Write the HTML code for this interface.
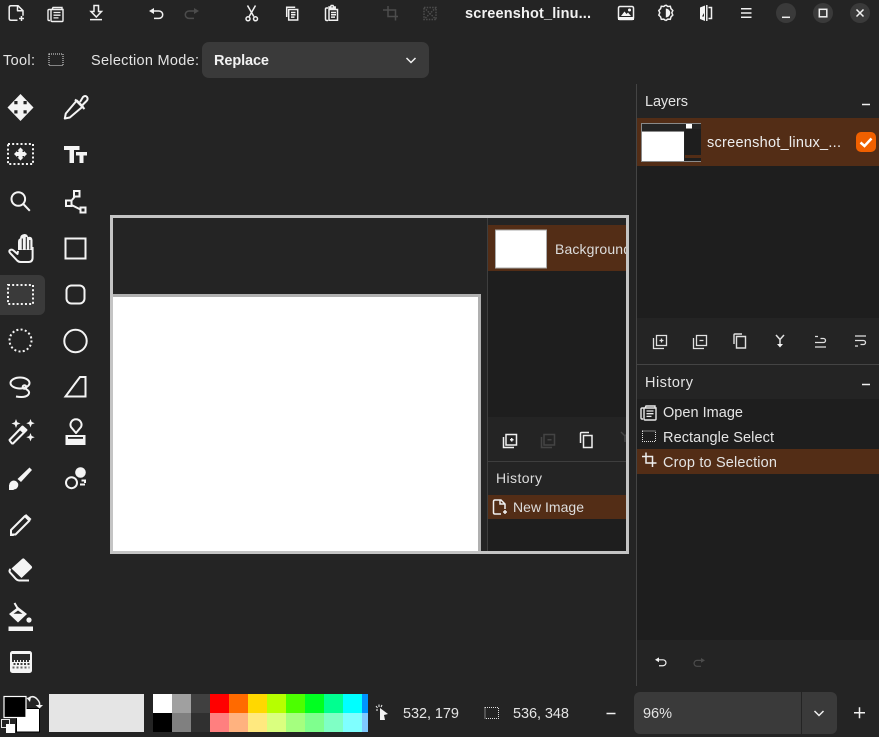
<!DOCTYPE html>
<html><head><meta charset="utf-8"><title>Pinta</title>
<style>
html,body{margin:0;padding:0;background:#242424;width:879px;height:737px;overflow:hidden}
svg{display:block}
text{font-family:"Liberation Sans",sans-serif;font-size:14.5px;fill:#e4e4e4}
.b{font-weight:700;fill:#f2f2f2}
.i{fill:none;stroke:#f0f0f0;stroke-width:1.5}
.t{fill:none;stroke:#f4f4f4;stroke-width:2}
.f{fill:#f4f4f4;stroke:none}
.d{fill:none;stroke:#4c4c4c;stroke-width:1.5}
</style></head><body>
<svg width="879" height="737" viewBox="0 0 879 737" xmlns="http://www.w3.org/2000/svg">
<defs>
<clipPath id="cl"><rect x="488" y="218" width="138" height="333"/></clipPath>
<g id="open"><path d="M1 4h3l1-2h9v2M1 4c-1 0-1 1-1 1v9c0 1 1 1 1 1h1M3 4h12v11c0 1-1 1-1 1H4c-1 0-1-1-1-1z" fill="none" stroke-width="1.4"/><path d="M5.500 7h7M5.500 9.700h7M5.500 12.400h5" fill="none" stroke-width="1.300"/></g>
<g id="undo"><path d="M4 3h6a3.700 3.700 0 0 1 0 7.400H5" fill="none" stroke-width="1.500"/><path d="M0 3l5-3v6z" stroke="none"/></g>
</defs>
<rect width="879" height="737" fill="#242424"/>

<!-- header icons -->
<path class="i" d="M13.500 5.700h-2.500q-1.800 0-1.800 1.800v11q0 1.800 1.800 1.800h6.500M13.500 5.700h4.500l5 5v5M17.500 5.700v5h5.500" stroke-linejoin="round"/>
<path class="i" d="M19 18.500h5M21.500 16v5" stroke-width="1.200"/>
<use href="#open" x="48" y="5.500" stroke="#f0f0f0"/>
<path class="i" d="M94 5.500h4.500v6h3l-5.200 5.500-5.300-5.500h3zM90 19.600h12"/>
<use href="#undo" x="149" y="8" stroke="#f0f0f0" fill="#f0f0f0"/>
<g transform="translate(199 8) scale(-1 1)" fill="#4c4c4c" stroke="#4c4c4c"><use href="#undo"/></g>
<path class="i" d="M247.500 5.500l6.300 11M255.500 5.500l-6.300 11"/>
<circle class="i" cx="248" cy="18.800" r="2"/><circle class="i" cx="255.500" cy="18.800" r="2"/>
<path class="i" d="M286.700 17V7.200h8.500M288.700 9.500h9v10.500h-9zM291 12.500h4.500M291 14.800h4.500M291 17.100h3.500" stroke-width="1.300"/>
<path class="i" d="M328 8h-1.500q-1 0-1 1v10q0 1.500 1.500 1.500h1M329 9.500h8.500v10.800h-8.500zM329 8V7h1.500l.7-1.500h1.800l.7 1.500h1.500v1zM331 12.500h5M331 14.800h5M331 17.100h4" stroke-width="1.300"/>
<path class="d" d="M383 10h12.500v10.500M388 6v10.500h10" stroke-width="2"/>
<path class="d" d="M424 7.500h12v12h-12zM424 7.500l12 12M436 7.500l-12 12" stroke-dasharray="1.500 1.200" stroke-width="1.500"/>

<text class="b" x="465" y="18" textLength="126" lengthAdjust="spacing" style="font-size:14.500px">screenshot_linu...</text>

<rect x="618.500" y="6.500" width="15" height="13" rx="1.500" class="i"/>
<path class="f" d="M621 16l3.500-4.500 2 2.500 1.500-1.500 3 3.500zM618 17h16v3h-16z"/><circle class="f" cx="629.500" cy="10" r="1.500"/>
<path class="i" d="M665.800 6l2 1.500 2.500-.2.700 2.400 1.800 1.800-1 2.300 1 2.300-1.800 1.800-.7 2.400-2.500-.2-2 1.500" transform="translate(0 -1)"/>
<path class="i" d="M665.800 5l-2 1.500-2.500-.2-.7 2.400-1.800 1.800 1 2.300-1 2.300 1.800 1.800.7 2.400 2.500-.2 2 1.500" />
<path class="f" d="M665.800 8.500a4.500 4.500 0 0 1 0 9z"/>
<path class="f" d="M700 7.500l5-2v15.500l-5-2z"/>
<path class="i" d="M706.800 5v16" stroke-width="1"/>
<path class="i" d="M708.500 7.500h3v11h-3" stroke-width="1.300"/>
<path d="M702 16.500l2-3.500v3.500z" fill="#242424"/>
<path class="i" d="M741 8.700h10.500M741 13h10.500M741 17.300h10.500" stroke-width="1.200"/>

<circle cx="786" cy="13" r="10" fill="#3a3a3a"/><circle cx="823" cy="13" r="10" fill="#3a3a3a"/><circle cx="860" cy="13" r="10" fill="#3a3a3a"/>
<path class="i" d="M782 17.300h8" stroke-width="1.400"/>
<rect x="819.300" y="9.300" width="7.500" height="7.500" class="i" stroke-width="1.300"/>
<path class="i" d="M856.500 9.500l7 7M863.500 9.500l-7 7" stroke-width="1.300"/>

<!-- tool options -->
<text x="3" y="65" textLength="32">Tool:</text>
<rect x="49" y="54" width="14" height="11.500" fill="none" stroke="#e4e4e4" stroke-dasharray="1 1"/>
<text x="91" y="65" textLength="108">Selection Mode:</text>
<rect x="202" y="42" width="227" height="36" rx="7" fill="#3a3a3a"/>
<text class="b" x="214" y="65" textLength="55">Replace</text>
<path class="i" d="M406.500 58l4.500 4.500 4.500-4.500" stroke-width="1"/>

<!-- toolbox -->
<path d="M0 275h39a6 6 0 0 1 6 6v28a6 6 0 0 1-6 6H0z" fill="#3a3a3a"/>

<!-- move -->
<path class="f" d="M20.500 94l13 13.500-13 13.500-13-13.500z"/>
<path d="M14.300 101h3.200v3.200h-3.200zM23.500 101h3.200v3.200h-3.200zM14.300 110.300h3.200v3.200h-3.200zM23.500 110.300h3.200v3.200h-3.200z" fill="#242424"/>
<!-- rect select move -->
<rect x="8" y="144" width="25" height="20" class="t" stroke-dasharray="2 2.170" stroke-width="2.200"/>
<path class="f" d="M20.500 147.500l6.500 6.500-6.500 6.500-6.500-6.500z"/>
<path d="M17 150.500h1.500v1.500H17zM22.500 150.500H24v1.500h-1.500zM17 156h1.500v1.500H17zM22.500 156H24v1.500h-1.500z" fill="#242424"/>
<!-- magnify -->
<circle cx="18.300" cy="199" r="6.800" class="t"/><path class="t" d="M23.300 204l6.500 6.800" stroke-width="2.200"/>
<!-- hand -->
<path class="t" d="M18 251l-.5 3-4-3.500q-1.800-1.500-3.400-.5t0 3l7 7.500q1.500 1.500 3.500 1.500h8q4 0 4-4.500V247" stroke-linejoin="round"/>
<path class="f" d="M18 242q0-3 2-3.500 0-4 4.500-4.500 3 0 3.500 3 4-1 4.500 3v10H18z"/>
<path d="M22.300 238.500v11M26.300 237v12.500M29.800 240v9.500" stroke="#242424" stroke-width="1.100"/>
<!-- dotted rect -->
<rect x="8" y="285" width="25" height="19" class="t" stroke-dasharray="2 2.170" stroke-width="2.200"/>
<!-- dotted circle -->
<circle cx="20.500" cy="340.500" r="11" class="t" stroke-dasharray="2 2.300" stroke-width="2.200"/>
<!-- lasso -->
<ellipse cx="20" cy="383" rx="9.500" ry="5.500" class="t" stroke-width="1.800"/>
<circle cx="24.500" cy="387" r="1.800" class="t" stroke-width="1.800"/>
<path class="t" d="M26 389q5 3 2 6t-12 1.500" stroke-width="1.800"/>
<!-- wand -->
<path class="t" d="M10 441l-.5-1 13-13.500 4 3.500-13.500 13.500-1 0z" stroke-linejoin="round"/>
<path class="f" d="M19.500 430l3-3.500 4 3.500-3.500 3z"/>
<path class="f" d="M16 419l1.200 3.300 3.300 1.200-3.300 1.200-1.200 3.300-1.200-3.300-3.300-1.200 3.300-1.200zM30.500 419l1.200 3 3 1.200-3 1.200-1.200 3-1.200-3-3-1.200 3-1.200zM30.500 433l1.200 3 3 1.200-3 1.200-1.200 3-1.200-3-3-1.200 3-1.200z"/>
<!-- brush -->
<path class="f" d="M29.500 467.500l2.500 2.500-11 12-3.500-3z"/><circle class="f" cx="13.800" cy="485" r="4.500"/><path class="f" d="M9 484.500v5.500h5z"/>
<!-- pencil -->
<path class="t" d="M11 534.500v-4.500l14-14 4.500 4.500-14 14z" stroke-linejoin="round" stroke-width="1.700"/>
<path class="f" d="M26 514l5.500 5-2.500 2.500-5-5zM10 536v-4l4 4z"/>
<!-- eraser -->
<path class="f" d="M22 559q1.300-1.300 2.500 0l7 7q1.200 1.300 0 2.500l-10 9.500-10-9.500z"/>
<path class="t" d="M10.500 569q-2 2 0 4l5.500 6q1.500 1.500 3 1.500h10" stroke-width="1.300"/>
<!-- fill -->
<path class="t" d="M14.500 603l3.500 6" stroke-width="1.700"/>
<path class="f" d="M18 607l9 7-9 8.500-9-8.500z"/><path d="M18 610.500l4.500 3.200h-9z" fill="#242424"/>
<circle cx="29" cy="620" r="2.600" class="f"/>
<rect x="8.500" y="626.500" width="24.500" height="4.500" class="f"/>
<!-- gradient -->
<rect x="10" y="651" width="22" height="22" rx="2.500" class="f"/>
<rect x="12" y="654" width="18" height="6" fill="#2a2a2a"/>
<path d="M12 661h18" stroke="#333" stroke-width="2" stroke-dasharray="2 1"/>
<path d="M13.500 664h16" stroke="#444" stroke-width="2" stroke-dasharray="2 1.500"/>
<path d="M12.500 667.500h17" stroke="#666" stroke-width="2" stroke-dasharray="2 2"/>

<!-- col 2 -->
<path class="t" d="M64.800 118.500l1-5 11-13 6 6-13 11z" stroke-width="1.500" stroke-linejoin="round"/>
<path class="t" d="M75 99.500l9.500 9.500" stroke-width="2"/>
<path class="t" d="M80 102l3-5q2.500-2 4 0t-.5 4l-4 4" stroke-width="1.700"/>
<path class="f" d="M64 146h15.500v4h-5.500v13h-4.500v-13H64zM76 152h11v3.500h-3.500V163h-4v-7.500H76z"/>
<rect x="74" y="191" width="5.500" height="5.500" class="t"/><rect x="66" y="200.500" width="5.500" height="5.500" class="t"/><rect x="80.500" y="207.500" width="5" height="5" class="t"/>
<path class="t" d="M72 200l2.500-3M71.500 205l9 4.500" stroke-width="1.800"/>
<rect x="65.500" y="238.500" width="20" height="20" class="t"/>
<rect x="66.500" y="285.500" width="18" height="18" rx="5" class="t"/>
<circle cx="75.500" cy="341" r="11.200" class="t"/>
<path class="t" d="M65.500 396.500h20V377h-5.500l-6 8-8.500 11.500z" stroke-linejoin="miter"/>
<path class="t" d="M76 433L71 427A5.500 5.500 0 1 1 81 427Z" stroke-linejoin="round" stroke-width="1.800"/>
<path class="f" d="M65.500 435h20v10h-20z"/><rect x="68" y="437" width="15" height="1.800" fill="#242424"/>
<circle cx="80.500" cy="472.500" r="5.300" class="f"/>
<circle cx="71.500" cy="482.700" r="5.500" class="t"/>
<path class="t" d="M81.500 480.500h3.500v2.500M80 484.500h5" stroke-width="1" stroke="#aaa"/>

<!-- canvas -->
<rect x="110" y="215" width="519" height="339" fill="#c4c4c4"/>
<rect x="113" y="218" width="513" height="333" fill="#242424"/>
<rect x="113" y="294" width="368" height="3" fill="#b0b0b0"/>
<rect x="113" y="297" width="365" height="254" fill="#fff"/>
<rect x="478" y="294" width="3" height="257" fill="#b0b0b0"/>
<rect x="487" y="218" width="1" height="333" fill="#3e3e3e"/>
<g clip-path="url(#cl)">
<rect x="488" y="225" width="138" height="46" fill="#532d16"/>
<rect x="495.500" y="230" width="51" height="38" fill="#fff" stroke="#aaa"/>
<text x="555" y="254" textLength="76" style="font-size:14px;fill:#ddd">Background</text>
<rect x="488" y="271" width="138" height="146" fill="#1e1e1e"/>
<rect x="488" y="461" width="138" height="1" fill="#3e3e3e"/>
<text x="496" y="483" textLength="46" style="font-size:14px;fill:#ddd">History</text>
<rect x="488" y="495" width="138" height="24" fill="#532d16"/>
<rect x="488" y="519" width="138" height="32" fill="#1e1e1e"/>
<path class="i" d="M498 500h-3q-1.500 0-1.500 1.500v11q0 1.500 1.500 1.500h6M498 500h3l4 4v5M500 500v4h5" stroke-width="1.200"/>
<path class="i" d="M503 512h4M505 510v4" stroke-width="1"/>
<text x="513" y="512" textLength="71" style="font-size:14px;fill:#ddd">New Image</text>
<path class="i" d="M506 434.500h10.500v10.500H506zM510 439.700h3.500M511.700 438v3.500M503.500 437v10.500H514" stroke="#e0e0e0" stroke-width="1.200"/>
<path class="d" d="M544 434.500h10.500v10.500H544zM547.500 439.700h4M541.500 437v10.500H552" stroke-width="1.200" style="stroke:#444"/>
<path class="i" d="M580.500 443v-9.500q0-1 1-1H589M583.500 435.500h8.500v12h-8.500z" stroke-width="1.300"/>
<path class="d" d="M621 432l4 4v6M625 436l3-3" style="stroke:#444"/>
</g>

<!-- right panel -->
<rect x="636" y="84" width="1" height="602" fill="#444"/>
<text x="645" y="106" textLength="43">Layers</text>
<path class="i" d="M862 104.500h8" stroke-width="1.200"/>
<rect x="637" y="118" width="242" height="48" fill="#532d16"/>
<rect x="641" y="123" width="60" height="39" fill="#8a8a8a"/>
<rect x="642" y="124" width="59" height="37" fill="#242424"/>
<rect x="642" y="131" width="42" height="1" fill="#8a8a8a"/>
<rect x="642" y="132" width="42" height="29" fill="#fff"/>
<rect x="685" y="129" width="16" height="32" fill="#1e1e1e"/>
<rect x="686" y="124" width="6" height="4.500" fill="#fff"/>
<rect x="685" y="155" width="16" height="3" fill="#532d16"/>
<text x="707" y="147" textLength="134" style="fill:#eee">screenshot_linux_...</text>
<rect x="856" y="132" width="20" height="20" rx="5" fill="#f06000"/>
<path d="M860.500 142.500l4 3.500 7-7.500" fill="none" stroke="#fff" stroke-width="2.500"/>
<rect x="637" y="166" width="242" height="152" fill="#1e1e1e"/>
<rect x="637" y="364" width="242" height="1" fill="#444"/>

<g stroke="#e0e0e0" fill="none" stroke-width="1.300">
<path d="M656.500 335.500h10v10h-10zM659.500 340.500h4M661.500 338.500v4M653.500 338v10.500H664"/>
<path d="M696.500 335.500h10v10h-10zM699.500 340.500h4M693.500 338v10.500H704"/>
<path d="M734 344v-9q0-1 1-1h7M736.500 336.500h9v11.500h-9z" stroke-width="1.400"/>
<path d="M776 335l4 4.500 4-4.500M780 339.500v6" stroke-width="1.500"/><path class="f" d="M777 344h6l-3 3.500z"/>
<path d="M815 342.500h8.500a2 2 0 0 0 0-4h-3M815 347h11M815 336.500h3"/>
<path d="M855 336h11M855 340.500h8.500a2 2 0 0 1 0 4h-3M855 346h3"/>
</g>

<text x="645" y="387" textLength="48">History</text>
<path class="i" d="M862 384.500h8" stroke-width="1.200"/>
<rect x="637" y="399" width="242" height="241" fill="#1e1e1e"/>
<rect x="637" y="449" width="242" height="25" fill="#532d16"/>
<use href="#open" x="641" y="404" stroke="#e8e8e8"/>
<text x="663" y="417" textLength="80">Open Image</text>
<rect x="642.500" y="431" width="13" height="10.500" fill="none" stroke="#e0e0e0" stroke-dasharray="1 1"/>
<text x="663" y="442" textLength="111">Rectangle Select</text>
<path class="i" d="M642 456.500h10.500v10.500M646 452.500v10.500h10.500" style="stroke:#eee"/>
<text x="663" y="467" textLength="114">Crop to Selection</text>
<use href="#undo" x="655" y="658" stroke="#f0f0f0" fill="#f0f0f0" transform="translate(131 131) scale(.8)"/>
<g transform="translate(705 658) scale(-.8 .8)" fill="#4c4c4c" stroke="#4c4c4c"><use href="#undo"/></g>

<!-- status: colours -->
<rect x="16.500" y="708.500" width="23" height="23.500" fill="#fff" stroke="#000"/>
<rect x="4" y="696.500" width="22" height="21" fill="#000" stroke="#fff" stroke-width="1.200"/>
<rect x="1.500" y="719.500" width="8" height="8" fill="#242424" stroke="#e8e8e8"/>
<rect x="6" y="724" width="9" height="9" fill="#fff"/>
<path class="i" d="M29 698q4-3 8 1t2 7" stroke-width="1.500"/>
<path class="f" d="M26.500 698l3.500 4 1-5zM35.500 705h7.500l-3.500 3.500z"/>
<rect x="49" y="694" width="95" height="38" fill="#e5e5e5"/>
<g>
<rect x="153" y="694" width="19" height="19" fill="#fff"/><rect x="172" y="694" width="19" height="19" fill="#a0a0a0"/><rect x="191" y="694" width="19" height="19" fill="#404040"/><rect x="210" y="694" width="19" height="19" fill="#f00"/><rect x="229" y="694" width="19" height="19" fill="#ff6a00"/><rect x="248" y="694" width="19" height="19" fill="#ffd800"/><rect x="267" y="694" width="19" height="19" fill="#b6ff00"/><rect x="286" y="694" width="19" height="19" fill="#4cff00"/><rect x="305" y="694" width="19" height="19" fill="#00ff21"/><rect x="324" y="694" width="19" height="19" fill="#00ff90"/><rect x="343" y="694" width="19" height="19" fill="#0ff"/><rect x="362" y="694" width="6" height="19" fill="#0094ff"/>
<rect x="153" y="713" width="19" height="19" fill="#000"/><rect x="172" y="713" width="19" height="19" fill="#808080"/><rect x="191" y="713" width="19" height="19" fill="#303030"/><rect x="210" y="713" width="19" height="19" fill="#ff7f7f"/><rect x="229" y="713" width="19" height="19" fill="#ffb27f"/><rect x="248" y="713" width="19" height="19" fill="#ffe97f"/><rect x="267" y="713" width="19" height="19" fill="#daff7f"/><rect x="286" y="713" width="19" height="19" fill="#a5ff7f"/><rect x="305" y="713" width="19" height="19" fill="#7fff8e"/><rect x="324" y="713" width="19" height="19" fill="#7fffc5"/><rect x="343" y="713" width="19" height="19" fill="#7fffff"/><rect x="362" y="713" width="6" height="19" fill="#7fc9ff"/>
</g>
<path class="f" d="M380 708l8 6-4 1 1 5h-5z"/>
<path d="M376 706l1.500 2M379 704.500v2.500M382 705l-1 2M376 710h2" stroke="#f0f0f0" stroke-width="1"/>
<text x="403" y="718" textLength="56">532, 179</text>
<rect x="485" y="707.500" width="13.500" height="11" fill="none" stroke="#e0e0e0" stroke-dasharray="1 1"/>
<text x="513" y="718" textLength="56">536, 348</text>
<path class="i" d="M606.500 713.500h9" stroke-width="1.300"/>
<rect x="634" y="692" width="203" height="42" rx="6" fill="#3a3a3a"/>
<rect x="801" y="692" width="1" height="42" fill="#242424"/>
<text x="643" y="718" textLength="29">96%</text>
<path class="i" d="M814.500 711l4.500 4.500 4.500-4.500" stroke-width="1"/>
<path class="i" d="M854 712.700h11M859.500 707.200v11" stroke-width="1.300"/>
</svg>
</body></html>
